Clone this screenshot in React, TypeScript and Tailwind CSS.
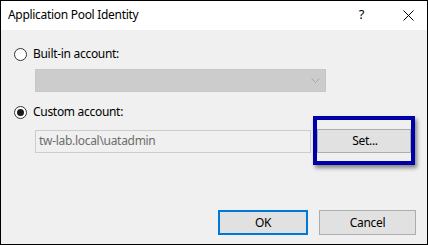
import React from 'react'

const font = { fontFamily: '"Segoe UI", "Noto Sans", "Liberation Sans", sans-serif' }

function Radio({ checked, label }: { checked?: boolean; label: string }) {
  return (
    <div className="flex items-center h-[16px] pl-[13px]">
      <span className="w-[13px] h-[13px] rounded-full border border-[#333333] bg-white flex items-center justify-center">
        {checked && <span className="w-[7px] h-[7px] rounded-full bg-[#1a1a1a]" />}
      </span>
      <span className="ml-[6px] text-[12px] text-black leading-none">{label}</span>
    </div>
  )
}

export default function App() {
  return (
    <div style={font} className="w-[428px] h-[245px] border border-black bg-[#f0f0f0] flex flex-col relative tracking-[-0.3px]">
      {/* title bar */}
      <div className="h-[29px] bg-white flex items-center pl-[7px] pr-[13px] shrink-0">
        <span className="text-[12px] text-black flex-1 -mt-[2px]">Application Pool Identity</span>
        <span className="text-[13px] text-black mr-[39px] -mt-[2px]">?</span>
        <svg width="11" height="11" viewBox="0 0 11 11" className="-mt-[1px]">
          <path d="M0.5 0.5 L10.5 10.5 M10.5 0.5 L0.5 10.5" stroke="#000" strokeWidth="1" />
        </svg>
      </div>

      <div className="mt-[16px]">
        <Radio label="Built-in account:" />
      </div>
      <div className="mt-[7px] ml-[34px] w-[291px] h-[23px] bg-[#cccccc] border border-[#c6c6c6] flex items-center justify-end pr-[5px]">
        <svg width="9" height="6" viewBox="0 0 9 6">
          <path d="M0.5 0.5 L4.5 4.5 L8.5 0.5" stroke="#a8a8a8" strokeWidth="1" fill="none" />
        </svg>
      </div>

      <div className="mt-[12px]">
        <Radio checked label="Custom account:" />
      </div>

      <div className="mt-[9px] ml-[34px] flex items-center">
        <div className="w-[276px] h-[23px] border border-[#cccccc] bg-[#f0f0f0] flex items-center pl-[3px] text-[12px] text-[#6d6d6d]">
          tw-lab.local\uatadmin
        </div>
        <div className="ml-[6px] w-[94px] h-[24px] bg-[#e1e1e1] border border-[#adadad] flex items-center justify-center text-[12px] text-black pl-[2px]">
          Set...
        </div>
      </div>

      {/* highlight annotation over the Set button */}
      <div className="absolute left-[312px] top-[115px] w-[102px] h-[49px] border-[4px] border-[#0000a8] shadow-[2px_3px_4px_rgba(0,0,0,0.45)]" />

      <div className="mt-auto mb-[9px] flex justify-end pr-[11px] gap-[11px]">
        <div className="w-[90px] h-[25px] bg-[#e1e1e1] border-2 border-[#0078d7] flex items-center justify-center text-[12px] text-black">
          OK
        </div>
        <div className="w-[97px] h-[25px] bg-[#e1e1e1] border border-[#adadad] flex items-center justify-center text-[12px] text-black">
          Cancel
        </div>
      </div>
    </div>
  )
}
